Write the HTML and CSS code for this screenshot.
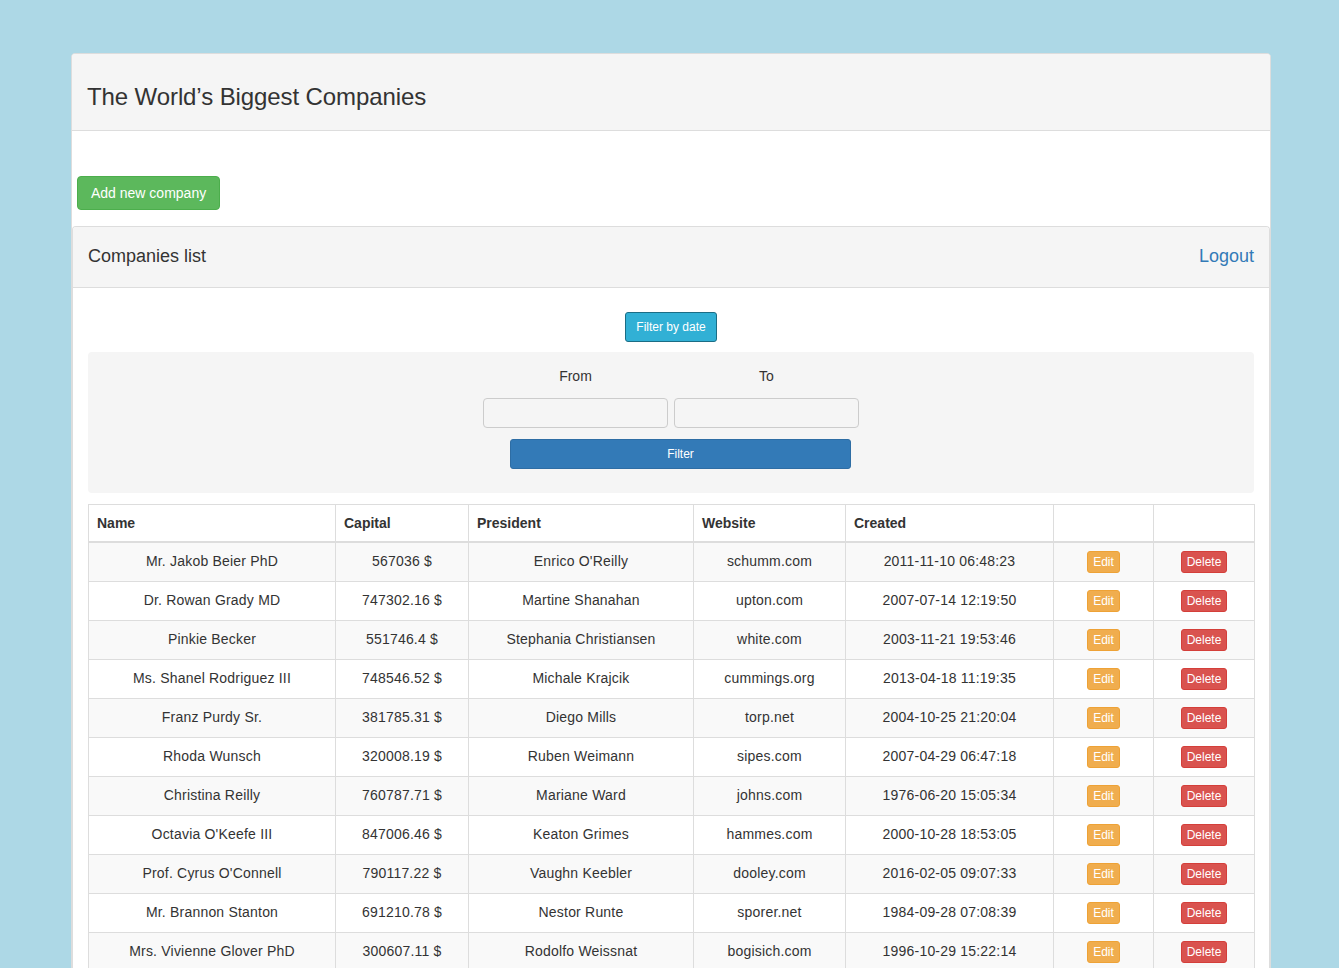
FILE: index.html
```html
<!DOCTYPE html>
<html>
<head>
<meta charset="utf-8">
<title>The World's Biggest Companies</title>
<link rel="stylesheet" href="styles.css">
</head>
<body>
<div class="page">
  <div class="panel">
    <div class="panel-heading">
      <h3 class="title">The World’s Biggest Companies</h3>
    </div>
    <div class="outer-body">
      <div class="add-row"><button class="btn btn-success">Add new company</button></div>
      <div class="panel inner">
        <div class="panel-heading list-heading">
          <h4 class="subtitle">Companies list</h4>
          <a class="logout" href="#">Logout</a>
        </div>
        <div class="panel-body">
          <div class="filter-toggle"><button class="btn btn-sm btn-info">Filter by date</button></div>
          <div class="well">
            <div class="date-grid">
              <label class="date-label">From</label>
              <label class="date-label">To</label>
              <input class="date-input" type="text">
              <input class="date-input" type="text">
            </div>
            <button class="btn btn-sm btn-primary filter-btn">Filter</button>
          </div>
          <table class="table">
            <thead>
              <tr>
                <th class="c-name">Name</th>
                <th class="c-cap">Capital</th>
                <th class="c-pres">President</th>
                <th class="c-web">Website</th>
                <th class="c-created">Created</th>
                <th class="c-edit"></th>
                <th class="c-del"></th>
              </tr>
            </thead>
            <tbody>
              <tr><td>Mr. Jakob Beier PhD</td><td>567036 $</td><td>Enrico O'Reilly</td><td>schumm.com</td><td>2011-11-10 06:48:23</td><td><button class="btn btn-xs btn-warning">Edit</button></td><td><button class="btn btn-xs btn-danger">Delete</button></td></tr>
              <tr><td>Dr. Rowan Grady MD</td><td>747302.16 $</td><td>Martine Shanahan</td><td>upton.com</td><td>2007-07-14 12:19:50</td><td><button class="btn btn-xs btn-warning">Edit</button></td><td><button class="btn btn-xs btn-danger">Delete</button></td></tr>
              <tr><td>Pinkie Becker</td><td>551746.4 $</td><td>Stephania Christiansen</td><td>white.com</td><td>2003-11-21 19:53:46</td><td><button class="btn btn-xs btn-warning">Edit</button></td><td><button class="btn btn-xs btn-danger">Delete</button></td></tr>
              <tr><td>Ms. Shanel Rodriguez III</td><td>748546.52 $</td><td>Michale Krajcik</td><td>cummings.org</td><td>2013-04-18 11:19:35</td><td><button class="btn btn-xs btn-warning">Edit</button></td><td><button class="btn btn-xs btn-danger">Delete</button></td></tr>
              <tr><td>Franz Purdy Sr.</td><td>381785.31 $</td><td>Diego Mills</td><td>torp.net</td><td>2004-10-25 21:20:04</td><td><button class="btn btn-xs btn-warning">Edit</button></td><td><button class="btn btn-xs btn-danger">Delete</button></td></tr>
              <tr><td>Rhoda Wunsch</td><td>320008.19 $</td><td>Ruben Weimann</td><td>sipes.com</td><td>2007-04-29 06:47:18</td><td><button class="btn btn-xs btn-warning">Edit</button></td><td><button class="btn btn-xs btn-danger">Delete</button></td></tr>
              <tr><td>Christina Reilly</td><td>760787.71 $</td><td>Mariane Ward</td><td>johns.com</td><td>1976-06-20 15:05:34</td><td><button class="btn btn-xs btn-warning">Edit</button></td><td><button class="btn btn-xs btn-danger">Delete</button></td></tr>
              <tr><td>Octavia O'Keefe III</td><td>847006.46 $</td><td>Keaton Grimes</td><td>hammes.com</td><td>2000-10-28 18:53:05</td><td><button class="btn btn-xs btn-warning">Edit</button></td><td><button class="btn btn-xs btn-danger">Delete</button></td></tr>
              <tr><td>Prof. Cyrus O'Connell</td><td>790117.22 $</td><td>Vaughn Keebler</td><td>dooley.com</td><td>2016-02-05 09:07:33</td><td><button class="btn btn-xs btn-warning">Edit</button></td><td><button class="btn btn-xs btn-danger">Delete</button></td></tr>
              <tr><td>Mr. Brannon Stanton</td><td>691210.78 $</td><td>Nestor Runte</td><td>sporer.net</td><td>1984-09-28 07:08:39</td><td><button class="btn btn-xs btn-warning">Edit</button></td><td><button class="btn btn-xs btn-danger">Delete</button></td></tr>
              <tr><td>Mrs. Vivienne Glover PhD</td><td>300607.11 $</td><td>Rodolfo Weissnat</td><td>bogisich.com</td><td>1996-10-29 15:22:14</td><td><button class="btn btn-xs btn-warning">Edit</button></td><td><button class="btn btn-xs btn-danger">Delete</button></td></tr>
            </tbody>
          </table>
        </div>
      </div>
    </div>
  </div>
</div>
</body>
</html>
```

FILE: styles.css
```css
* { box-sizing: border-box; }
html, body {
  margin: 0;
  padding: 0;
  background: #add8e6;
  font-family: "Liberation Sans", Arial, Helvetica, sans-serif;
  font-size: 14px;
  line-height: 1.42857;
  color: #333;
}
.page {
  width: 1200px;
  margin: 53px 0 0 71px;
}
.panel {
  background: #fff;
  border: 1px solid #ddd;
  border-radius: 4px;
}
.panel-heading {
  background: #f5f5f5;
  border-bottom: 1px solid #ddd;
  padding: 10px 15px;
  border-radius: 3px 3px 0 0;
}
.title {
  margin: 20px 0 10px;
  font-size: 24px;
  font-weight: 500;
  line-height: 1.1;
  letter-spacing: -0.1px;
}
.outer-body {
  padding-top: 45px;
}
.add-row {
  padding-left: 5px;
  margin-bottom: 16px;
}
.inner {
  border-radius: 4px;
  border-bottom-width: 0;
}
.list-heading {
  display: flex;
  justify-content: space-between;
  align-items: center;
}
.subtitle {
  margin: 10px 0;
  font-size: 18px;
  font-weight: 500;
  line-height: 1.1;
}
.logout {
  color: #337ab7;
  font-size: 18px;
  text-decoration: none;
}
.panel-body {
  padding: 15px;
}
.btn {
  display: inline-block;
  font-family: inherit;
  font-size: 14px;
  line-height: 1.42857;
  padding: 6px 12px;
  border: 1px solid transparent;
  border-radius: 4px;
  color: #fff;
  cursor: pointer;
  text-align: center;
  white-space: nowrap;
}
.btn-success { padding: 7px 13px 5px; }
.btn-sm {
  font-size: 12px;
  line-height: 1.5;
  padding: 5px 10px;
  border-radius: 3px;
}
.btn-xs {
  font-size: 12px;
  line-height: 1.5;
  padding: 1px 5px;
  border-radius: 3px;
  letter-spacing: 0;
}
.btn-success { background: #5cb85c; border-color: #4cae4c; }
.btn-info { background: #31b0d5; border-color: #1b6d85; }
.btn-primary { background: #337ab7; border-color: #2e6da4; }
.btn-warning { background: #f0ad4e; border-color: #eea236; }
.btn-danger { background: #d9534f; border-color: #d43f3a; }
.filter-toggle {
  text-align: center;
  margin-top: 9px;
  margin-bottom: 10px;
}
.well {
  background: #f5f5f5;
  border-radius: 4px;
  padding: 15px 0 24px;
  margin-bottom: 11px;
}
.date-grid {
  display: grid;
  grid-template-columns: 185px 185px;
  column-gap: 6px;
  row-gap: 11px;
  justify-content: center;
}
.date-label {
  text-align: center;
  display: block;
}
.date-input {
  height: 30px;
  border: 1px solid #ccc;
  border-radius: 4px;
  background: transparent;
  padding: 5px 10px;
  font-family: inherit;
  font-size: 12px;
}
.filter-btn {
  display: block;
  width: 341px;
  margin: 11px 0 0 calc(50% - 161px);
}
.table {
  width: 100%;
  border-collapse: collapse;
  border: 1px solid #ddd;
  table-layout: fixed;
}
.table th, .table td {
  border: 1px solid #ddd;
  padding: 8px;
  vertical-align: middle;
}
.table th {
  text-align: left;
  font-weight: bold;
  border-bottom-width: 2px;
  vertical-align: bottom;
  padding: 9px 8px 7px;
}
.table td {
  text-align: center;
  letter-spacing: 0.2px;
}
.table tbody tr:nth-child(odd) {
  background: #f9f9f9;
}
.c-name { width: 247px; }
.c-cap { width: 133px; }
.c-pres { width: 225px; }
.c-web { width: 152px; }
.c-created { width: 208px; }
.c-edit { width: 100px; }
.c-del { width: 101px; }
```
